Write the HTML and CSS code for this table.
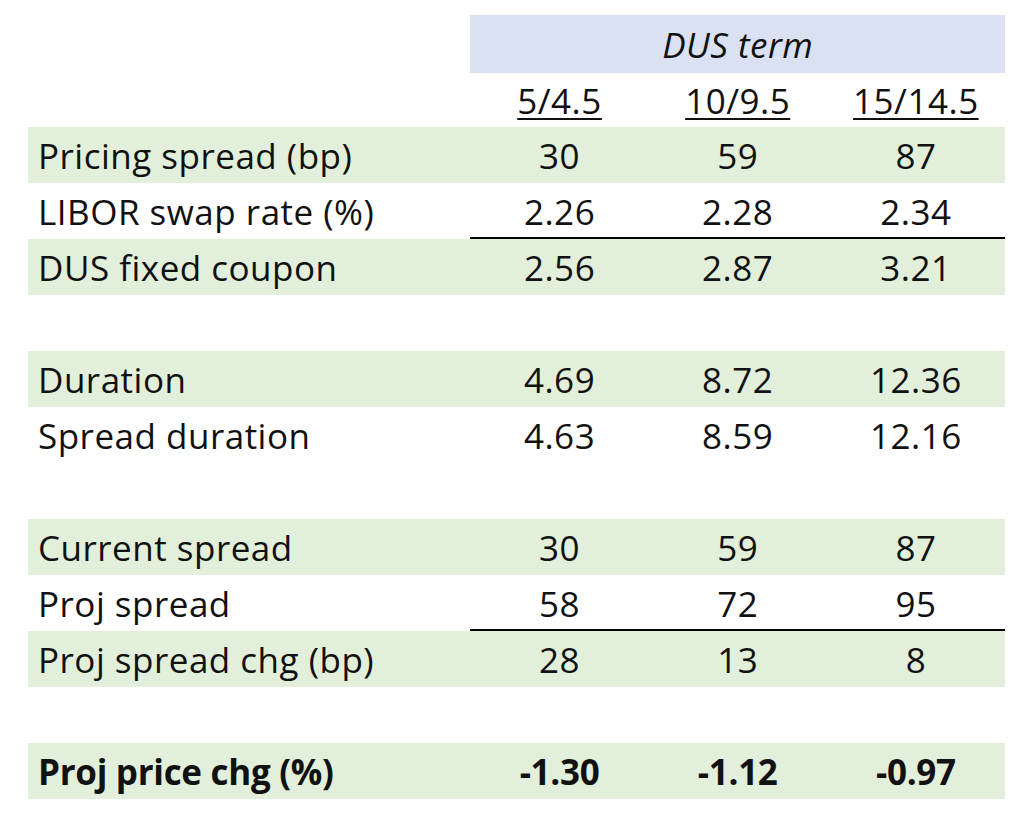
FILE: index.html
```html
<!DOCTYPE html>
<html lang="en">
<head>
<meta charset="utf-8">
<title>DUS term</title>
<link rel="stylesheet" href="styles.css">
</head>
<body>
<table class="dus">
  <colgroup>
    <col class="c-label"><col class="c-val"><col class="c-val"><col class="c-val">
  </colgroup>
  <tr class="r-head1">
    <td></td>
    <td class="term" colspan="3">DUS term</td>
  </tr>
  <tr class="r-head2">
    <td></td>
    <td class="sub"><u>5/4.5</u></td>
    <td class="sub"><u>10/9.5</u></td>
    <td class="sub"><u>15/14.5</u></td>
  </tr>
  <tr class="green">
    <td class="label">Pricing spread (bp)</td><td>30</td><td>59</td><td>87</td>
  </tr>
  <tr class="ruled">
    <td class="label">LIBOR swap rate (%)</td><td>2.26</td><td>2.28</td><td>2.34</td>
  </tr>
  <tr class="green">
    <td class="label">DUS fixed coupon</td><td>2.56</td><td>2.87</td><td>3.21</td>
  </tr>
  <tr class="blank"><td></td><td></td><td></td><td></td></tr>
  <tr class="green">
    <td class="label">Duration</td><td>4.69</td><td>8.72</td><td>12.36</td>
  </tr>
  <tr>
    <td class="label">Spread duration</td><td>4.63</td><td>8.59</td><td>12.16</td>
  </tr>
  <tr class="blank"><td></td><td></td><td></td><td></td></tr>
  <tr class="green">
    <td class="label">Current spread</td><td>30</td><td>59</td><td>87</td>
  </tr>
  <tr class="ruled">
    <td class="label">Proj spread</td><td>58</td><td>72</td><td>95</td>
  </tr>
  <tr class="green">
    <td class="label">Proj spread chg (bp)</td><td>28</td><td>13</td><td>8</td>
  </tr>
  <tr class="blank"><td></td><td></td><td></td><td></td></tr>
  <tr class="green bold">
    <td class="label">Proj price chg (%)</td><td>-1.30</td><td>-1.12</td><td>-0.97</td>
  </tr>
</table>
</body>
</html>
```
FILE: styles.css
```css
html, body {
  margin: 0;
  padding: 0;
  background: #ffffff;
}
body {
  padding: 15px 0 0 28px;
  font-family: "Open Sans", Lato, sans-serif;
  color: #111111;
}
.dus {
  border-collapse: collapse;
  border-spacing: 0;
  table-layout: fixed;
  width: 977px;
  font-size: 35px;
  letter-spacing: 0.5px;
}
.c-label { width: 442px; }
.c-val { width: 178px; }
.dus td {
  padding: 0;
  height: 56px;
  text-align: center;
  vertical-align: middle;
  white-space: nowrap;
}
.dus td.label {
  text-align: left;
  padding-left: 10px;
}
.r-head1 td { height: 58px; }
.r-head2 td { height: 54px; }
.term {
  background: #d9e1f2;
  font-style: italic;
}
.sub u {
  text-decoration-thickness: 2px;
  text-underline-offset: 4px;
}
.green td { background: #e2efda; }
.ruled td:not(.label) {
  box-shadow: inset 0 -2px 0 #000;
}
.bold td {
  font-weight: 700;
  letter-spacing: -0.3px;
}
```
